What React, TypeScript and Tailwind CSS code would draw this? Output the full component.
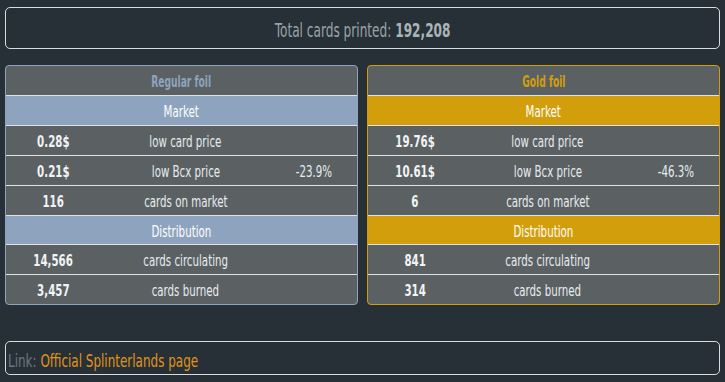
const FONT = "font-['DejaVu_Sans_Condensed','DejaVu_Sans',sans-serif]";

// narrow the condensed face further, the original uses a tall gothic font
const NARROW = 'inline-block translate-y-[1.5px] whitespace-nowrap';

interface FoilCardProps {
  title: string;
  accent: 'regular' | 'gold';
  lowPrice: string;
  bcxPrice: string;
  bcxDiff: string;
  onMarket: string;
  circulating: string;
  burned: string;
}

function Row({ value, label, extra }: { value: string; label: string; extra?: string }) {
  return (
    <div className="grid h-[30px] grid-cols-[94px_1fr_86px] items-center border-t border-[#dfe3e6] text-[15px]">
      <span className="text-center font-bold text-[#f1f3f4]">
        <span className={`${NARROW} scale-x-[0.76]`}>{value}</span>
      </span>
      <span className="text-center text-[#e6ecef]">
        <span className={`${NARROW} scale-x-[0.76]`}>{label}</span>
      </span>
      <span className="text-center text-[#e6ecef]">
        {extra && <span className={`${NARROW} scale-x-[0.76]`}>{extra}</span>}
      </span>
    </div>
  );
}

function Band({ text, gold, short }: { text: string; gold: boolean; short?: boolean }) {
  return (
    <div
      className={
        'flex items-center justify-center border-t border-[#dfe3e6] text-[15px] text-white ' +
        (short ? 'h-[29px] ' : 'h-[30px] ') +
        (gold ? 'bg-[#d29e0c]' : 'bg-[#8ea3bd]')
      }
    >
      <span className={`${NARROW} scale-x-[0.76]`}>{text}</span>
    </div>
  );
}

function FoilCard(props: FoilCardProps) {
  const isGold = props.accent === 'gold';

  return (
    <div
      className={
        'flex-1 overflow-hidden rounded-[4px] border bg-[#5b6163] ' +
        (isGold ? 'border-[#d29e0c]' : 'border-[#8ea3bd]')
      }
    >
      <div
        className={
          'flex h-[29px] items-center justify-center text-[15px] font-semibold ' +
          (isGold ? 'text-[#d29e0c]' : 'text-[#8ea3bd]')
        }
      >
        <span className={`${NARROW} scale-x-[0.68]`}>{props.title}</span>
      </div>
      <Band text="Market" gold={isGold} />
      <Row value={props.lowPrice} label="low card price" />
      <Row value={props.bcxPrice} label="low Bcx price" extra={props.bcxDiff} />
      <Row value={props.onMarket} label="cards on market" />
      <Band text="Distribution" gold={isGold} short />
      <Row value={props.circulating} label="cards circulating" />
      <Row value={props.burned} label="cards burned" />
    </div>
  );
}

export default function App() {
  return (
    <div className={`min-h-[382px] w-[725px] bg-[#273037] px-[5px] pt-[7px] ${FONT}`}>
      {/* Total */}
      <div className="flex h-[42px] items-center justify-center rounded-[5px] border border-[#d8dcde] text-[19px]">
        <span className={`${NARROW} scale-x-[0.71] text-[#98a4a8]`}>
          Total cards printed: <b className="text-[#aab3b6]">192,208</b>
        </span>
      </div>

      {/* Foils */}
      <div className="mt-[16px] flex gap-[9px]">
        <FoilCard
          title="Regular foil"
          accent="regular"
          lowPrice="0.28$"
          bcxPrice="0.21$"
          bcxDiff="-23.9%"
          onMarket="116"
          circulating="14,566"
          burned="3,457"
        />
        <FoilCard
          title="Gold foil"
          accent="gold"
          lowPrice="19.76$"
          bcxPrice="10.61$"
          bcxDiff="-46.3%"
          onMarket="6"
          circulating="841"
          burned="314"
        />
      </div>

      {/* Link */}
      <div className="mt-[36px] flex h-[34px] items-center rounded-[5px] border border-[#d8dcde] px-[2px] text-[18px]">
        <span className={`${NARROW} origin-left scale-x-[0.74]`}>
          <span className="text-[#6c777d]">Link: </span>
          <a className="text-[#e0941a]" href="#">
            Official Splinterlands page
          </a>
        </span>
      </div>
    </div>
  );
}
